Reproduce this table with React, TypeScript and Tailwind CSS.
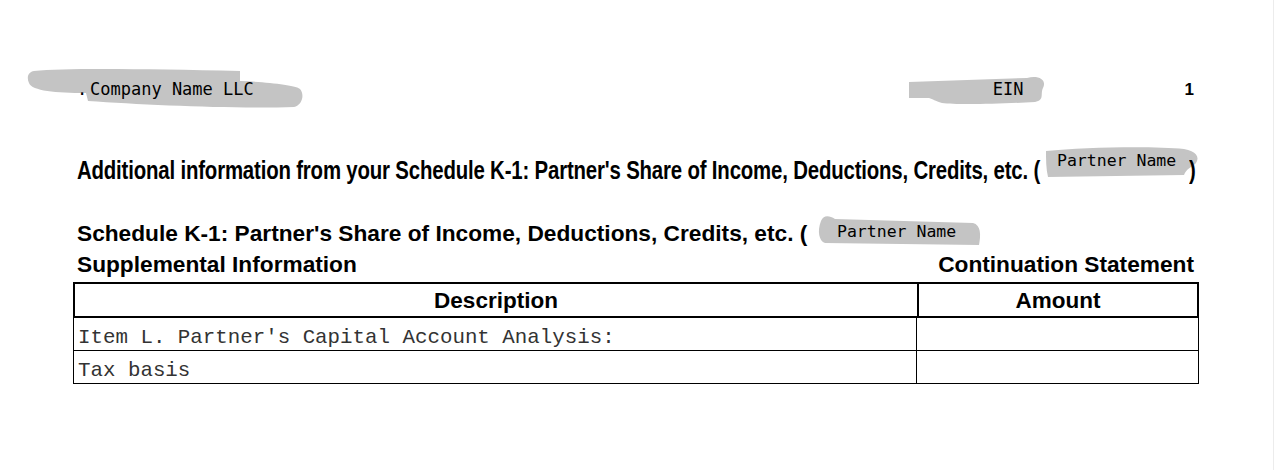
import React from 'react';

const mono = { fontFamily: '"DejaVu Sans Mono", monospace' };

function Blob({ d, w, h, className }: { d: string; w: number; h: number; className: string }) {
  return (
    <svg width={w} height={h} viewBox={`0 0 ${w} ${h}`} className={`absolute ${className}`}>
      <path d={d} fill="#c4c4c4" />
    </svg>
  );
}

export default function App() {
  return (
    <div className="relative w-[1274px] h-[470px] bg-white border-r border-[#ececec] font-['Liberation_Sans',Arial,sans-serif] text-black overflow-hidden">
      {/* redaction marks */}
      <Blob
        w={280}
        h={42}
        className="left-[26px] top-[67px]"
        d="M8 4 C40 1 120 2 214 4 L214 14 C240 15 270 18 274 22 C279 28 276 38 268 40 C210 42 120 38 62 34 L60 26 C30 26 6 24 3 16 C0 9 3 5 8 4 Z"
      />
      <Blob
        w={140}
        h={34}
        className="left-[907px] top-[72px]"
        d="M2 10 L120 6 C132 3 140 8 136 16 C133 22 138 28 128 30 C90 32 50 33 35 31 C28 29 26 27 22 26 L2 26 Z"
      />
      <Blob
        w={156}
        h={34}
        className="left-[1044px] top-[145px]"
        d="M2 6 C40 2 110 1 140 4 C152 6 156 12 152 18 C148 22 142 24 140 30 L4 32 C2 24 2 14 2 6 Z"
      />
      <Blob
        w={170}
        h={34}
        className="left-[813px] top-[213px]"
        d="M8 8 C10 2 16 2 22 6 L160 10 C168 12 168 22 166 32 L12 30 C6 28 4 18 8 8 Z"
      />

      <div className="relative flex flex-col pl-[77px] pr-[79px]">
        <div className="flex items-center h-[20px] mt-[80px] text-[17px]" style={mono}>
          <span className="w-[13px]">.</span>
          <span className="relative">Company Name LLC</span>
          <span className="relative ml-auto mr-[161px]">EIN</span>
          <span className="font-['Liberation_Sans',Arial,sans-serif] font-bold text-[17px]">1</span>
        </div>

        <div className="mt-[56px] flex items-center h-[30px] whitespace-nowrap">
          <span className="text-[25px] font-bold tracking-[-0.2px] origin-left scale-x-[0.815] inline-block">
            Additional information from your Schedule K-1: Partner's Share of Income, Deductions, Credits, etc. (
          </span>
        </div>

        <div className="mt-[33px] text-[22.7px] font-bold leading-[28px] whitespace-nowrap">
          Schedule K-1: Partner's Share of Income, Deductions, Credits, etc. (
        </div>
        <div className="flex justify-between text-[22.7px] font-bold leading-[28px] mt-[3px]">
          <span>Supplemental Information</span>
          <span>Continuation Statement</span>
        </div>
      </div>

      <div className="relative ml-[73px] w-[1126px] mt-[4px]">
        <div className="grid grid-cols-[844px_1fr] border-2 border-black h-[36px] text-[22.5px] font-bold">
          <div className="flex items-center justify-center border-r-2 border-black">Description</div>
          <div className="flex items-center justify-center">Amount</div>
        </div>
        {["Item L. Partner's Capital Account Analysis:", 'Tax basis'].map((t) => (
          <div
            key={t}
            className="flex border border-t-0 border-black h-[33px] text-[20.8px] leading-[20px] text-[#333] font-['Liberation_Mono','Courier_New',monospace]"
          >
            <div className="w-[843px] flex items-center pl-[4px] pt-[8px] border-r border-black">{t}</div>
            <div className="flex-1" />
          </div>
        ))}
      </div>

      {/* blob labels */}
      <span className="absolute left-[1057px] top-[149px] text-[16.5px]" style={mono}>Partner Name</span>
      <span className="absolute left-[837px] top-[220px] text-[16.5px]" style={mono}>Partner Name</span>
      <span className="absolute left-[1189px] top-[152px] text-[25px] font-bold origin-left scale-x-[0.815] inline-block">)</span>
    </div>
  );
}
